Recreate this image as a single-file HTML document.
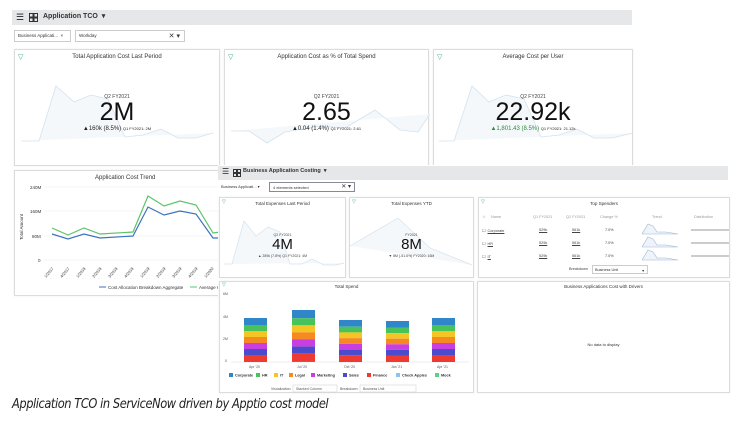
<!DOCTYPE html>
<html><head><meta charset="utf-8"><style>
*{margin:0;padding:0;box-sizing:border-box}
body{width:740px;height:425px;background:#fff;position:relative;overflow:hidden;font-family:"Liberation Sans",sans-serif;color:#222}
.a{position:absolute}
.bar{background:#e6e7e8}
.card{position:absolute;background:#fff;border:1px solid #dcdcdc;box-shadow:0 0 2px rgba(0,0,0,.08)}
.t{position:absolute;left:0;right:0;text-align:center;font-size:6px;color:#333}
.f{position:absolute;color:#3aa58a;font-size:7px}
.sel{position:absolute;border:1px solid #ccc;background:#fff;font-size:4.5px;padding:2px 3px;color:#333}
.big{position:absolute;left:0;right:0;text-align:center;color:#111}
.s{font-size:5px;color:#444;text-align:center;position:absolute;left:0;right:0}
</style></head><body>
<div class="a bar" style="left:12px;top:10px;width:620px;height:15px"></div>
<div class="a" style="left:16px;top:13px;font-size:9px;line-height:9px">&#9776;</div>
<svg class="a" style="left:29px;top:13px" width="9" height="9"><rect x="0.5" y="0.5" width="3.5" height="3.5" fill="none" stroke="#333"/><rect x="5" y="0.5" width="3.5" height="3.5" fill="none" stroke="#333"/><rect x="0.5" y="5" width="3.5" height="3.5" fill="none" stroke="#333"/><rect x="5" y="5" width="3.5" height="3.5" fill="none" stroke="#333"/></svg>
<div class="a" style="left:43px;top:12px;font-size:7px;font-weight:bold;color:#333">Application TCO &nbsp;▾</div>
<div class="sel" style="left:14px;top:30px;width:57px;height:12px">Business Applicati... &nbsp;×</div>
<div class="sel" style="left:75px;top:30px;width:110px;height:12px">Workday<span style="position:absolute;right:4px;top:1px;font-size:7px">✕ ▾</span></div>

<div class="card" style="left:14px;top:49px;width:206px;height:117px">
<div class="f" style="left:3px;top:3px">▽</div><div class="t" style="top:4px">Total Application Cost Last Period</div>
<svg class="a" style="left:0;top:0" width="206" height="117"><path d="M6 91 L24 91 L41 36 L59 52 L76 45 L93 49 L110 87 L128 85 L146 79 L163 88 L181 88 L198 83" fill="#f5f8fb" stroke="#d3e2ee" stroke-width="0.8"/></svg>
<div class="s" style="top:44px">Q2 FY2021</div><div class="big" style="top:48px;font-size:25px">2M</div><div class="s" style="top:76px;font-size:6px;color:#222">▲160k (8.5%) <span style="font-size:4px">Q1 FY2021: 2M</span></div></div>
<div class="card" style="left:224px;top:49px;width:205px;height:117px">
<div class="f" style="left:3px;top:3px">▽</div><div class="t" style="top:4px">Application Cost as % of Total Spend</div>
<svg class="a" style="left:0;top:0" width="205" height="117"><path d="M6 81 L24 81 L42 93 L60 82 L96 76 L120 78 L150 60 L175 80 L193 82 L205 64" fill="#f5f8fb" stroke="#d3e2ee" stroke-width="0.8"/></svg>
<div class="s" style="top:44px">Q2 FY2021</div><div class="big" style="top:48px;font-size:25px">2.65</div><div class="s" style="top:76px;font-size:6px;color:#222">▲0.04 (1.4%) <span style="font-size:4px">Q1 FY2021: 2.61</span></div></div>
<div class="card" style="left:433px;top:49px;width:200px;height:117px">
<div class="f" style="left:3px;top:3px">▽</div><div class="t" style="top:4px">Average Cost per User</div>
<svg class="a" style="left:0;top:0" width="200" height="117"><path d="M5 91 L20 91 L38 36 L55 52 L72 45 L90 49 L107 87 L125 85 L143 79 L160 88 L178 88 L199 83" fill="#f5f8fb" stroke="#d3e2ee" stroke-width="0.8"/></svg>
<div class="s" style="top:44px">Q2 FY2021</div><div class="big" style="top:48px;font-size:25px">22.92k</div><div class="s" style="top:76px;font-size:6px;color:#2a8a3a">▲1,801.43 (8.5%) <span style="font-size:4px;color:#222">Q1 FY2021: 21.12k</span></div></div>

<div class="card" style="left:14px;top:170px;width:206px;height:126px">
<div class="t" style="top:4px;font-size:6px;left:80px;right:auto">Application Cost Trend</div></div>
<svg class="a" style="left:14px;top:170px" width="206" height="126" font-family="Liberation Sans" font-size="4.5" fill="#333">
<g stroke="#eee" stroke-width="0.6"><line x1="30" y1="17" x2="206" y2="17"/><line x1="30" y1="41" x2="206" y2="41"/><line x1="30" y1="66" x2="206" y2="66"/><line x1="30" y1="90" x2="206" y2="90"/></g>
<text x="16" y="19">240M</text><text x="16" y="43">160M</text><text x="18" y="68">80M</text><text x="24" y="92">0</text>
<text transform="translate(9,70) rotate(-90)">Total Amount</text>
<polyline points="38,58 54,65 70,58 86,64 119,62 134,26 150,36 166,31 182,35 199,63 206,62" fill="none" stroke="#5bc468" stroke-width="1.2"/>
<polyline points="38,64 54,69 70,64 86,68 119,66 134,37 150,45 166,41 182,44 199,68 206,68" fill="none" stroke="#3d72c0" stroke-width="1.2"/>
<g font-size="4"><text transform="translate(32,108) rotate(-50)">1/2017</text><text transform="translate(48,108) rotate(-50)">4/2017</text><text transform="translate(64,108) rotate(-50)">1/2018</text><text transform="translate(80,108) rotate(-50)">2/2018</text><text transform="translate(96,108) rotate(-50)">3/2018</text><text transform="translate(112,108) rotate(-50)">4/2018</text><text transform="translate(128,108) rotate(-50)">1/2019</text><text transform="translate(144,108) rotate(-50)">2/2019</text><text transform="translate(160,108) rotate(-50)">3/2019</text><text transform="translate(176,108) rotate(-50)">4/2019</text><text transform="translate(192,108) rotate(-50)">1/2020</text></g>
<line x1="85" y1="117" x2="92" y2="117" stroke="#3d72c0"/><text x="94" y="119">Cost Allocation Breakdown Aggregate</text>
<line x1="176" y1="117" x2="183" y2="117" stroke="#5bc468"/><text x="185" y="119">Average C</text>
</svg>

<div class="a" style="left:218px;top:165px;width:512px;height:228px;background:#fff"></div>
<div class="a bar" style="left:218px;top:166px;width:510px;height:14px"></div>
<div class="a" style="left:222px;top:167px;font-size:8px;line-height:9px">&#9776;</div>
<svg class="a" style="left:233px;top:169px" width="8" height="8"><rect x="0.5" y="0.5" width="3" height="3" fill="none" stroke="#333"/><rect x="4.5" y="0.5" width="3" height="3" fill="none" stroke="#333"/><rect x="0.5" y="4.5" width="3" height="3" fill="none" stroke="#333"/><rect x="4.5" y="4.5" width="3" height="3" fill="none" stroke="#333"/></svg>
<div class="a" style="left:243px;top:168px;font-size:5.5px;font-weight:bold;color:#333">Business Application Costing &nbsp;▾</div>
<div class="a" style="left:221px;top:184px;font-size:4px;color:#333">Business Applicati... ▾</div>
<div class="sel" style="left:269px;top:182px;width:86px;height:10px;font-size:4px;padding:1.5px 3px;border-color:#889">4 elements selected<span style="position:absolute;right:3px;top:0;font-size:6px">✕ ▾</span></div>

<div class="card" style="left:219px;top:197px;width:127px;height:81px">
<div class="f" style="left:2px;top:1px;font-size:5px">▽</div><div class="t" style="top:3px;font-size:4.5px">Total Expenses Last Period</div>
<svg class="a" style="left:0;top:0" width="127" height="81"><path d="M4 66 L12 66 L24 23 L36 38 L48 29 L60 34 L70 66 L82 66 L92 61 L104 67 L116 67 L124 65" fill="#f5f8fb" stroke="#d3e2ee" stroke-width="0.7"/></svg>
<div class="s" style="top:35px;font-size:3.5px">Q2 FY2021</div><div class="big" style="top:38px;font-size:15px">4M</div><div class="s" style="top:56px;font-size:3.5px">▲ 289k (7.8%) Q1 FY2021: 4M</div></div>
<div class="card" style="left:349px;top:197px;width:125px;height:81px">
<div class="f" style="left:2px;top:1px;font-size:5px">▽</div><div class="t" style="top:3px;font-size:4.5px">Total Expenses YTD</div>
<svg class="a" style="left:0;top:0" width="125" height="81"><path d="M0 48 L48 20 L80 50 L122 67" fill="#f5f8fb" stroke="#d3e2ee" stroke-width="0.7"/></svg>
<div class="s" style="top:35px;font-size:3.5px">FY2021</div><div class="big" style="top:38px;font-size:15px">8M</div><div class="s" style="top:56px;font-size:3.5px">▼ 8M (-51.6%) FY2020: 16M</div></div>
<div class="card" style="left:478px;top:197px;width:252px;height:81px;font-size:3.8px;color:#444">
<div class="f" style="left:2px;top:1px;font-size:5px">▽</div><div class="t" style="top:3px;font-size:4.5px;color:#333">Top Spenders</div>
<div class="a" style="left:3px;top:16px;color:#3aa58a">☆</div><div class="a" style="left:12px;top:17px;color:#999">Name</div><div class="a" style="left:54px;top:17px;color:#999">Q1 FY2021</div><div class="a" style="left:87px;top:17px;color:#999">Q2 FY2021</div><div class="a" style="left:121px;top:17px;color:#999">Change %</div><div class="a" style="left:173px;top:17px;color:#999">Trend</div><div class="a" style="left:215px;top:17px;color:#999">Distribution</div>
<div class="a" style="left:3px;top:30px">☐ &nbsp;<u>Corporate</u></div><div class="a" style="left:60px;top:30px"><u>529k</u></div><div class="a" style="left:93px;top:30px"><u>561k</u></div><div class="a" style="left:126px;top:30px">7.0%</div>
<div class="a" style="left:3px;top:43px">☐ &nbsp;<u>HR</u></div><div class="a" style="left:60px;top:43px"><u>529k</u></div><div class="a" style="left:93px;top:43px"><u>561k</u></div><div class="a" style="left:126px;top:43px">7.0%</div>
<div class="a" style="left:3px;top:56px">☐ &nbsp;<u>IT</u></div><div class="a" style="left:60px;top:56px"><u>529k</u></div><div class="a" style="left:93px;top:56px"><u>561k</u></div><div class="a" style="left:126px;top:56px">7.0%</div>
<svg class="a" style="left:163px;top:22px" width="40" height="44"><g fill="#eef4fa" stroke="#9cb8d6" stroke-width="0.6"><path d="M0 14 L6 4 L11 6 L15 12 L24 12 L30 13 L36 14 L0 14"/><path d="M0 27 L6 17 L11 19 L15 25 L24 25 L30 26 L36 27 L0 27"/><path d="M0 40 L6 30 L11 32 L15 38 L24 38 L30 39 L36 40 L0 40"/></g></svg>
<div class="a" style="left:212px;top:31px;width:38px;height:2px;background:#ccc"></div><div class="a" style="left:212px;top:44px;width:38px;height:2px;background:#ccc"></div><div class="a" style="left:212px;top:57px;width:38px;height:2px;background:#ccc"></div>
<div class="a" style="left:90px;top:69px">Breakdown</div><div class="sel" style="left:113px;top:67px;width:56px;height:9px;font-size:3.8px;padding:1.5px 2px">Business Unit<span style="position:absolute;right:3px">▾</span></div>
</div>

<div class="card" style="left:219px;top:281px;width:255px;height:112px">
<div class="f" style="left:2px;top:0px;font-size:5px">▽</div><div class="t" style="top:2px;font-size:4.5px">Total Spend</div></div>
<svg class="a" style="left:219px;top:281px" width="255" height="112" font-family="Liberation Sans" font-size="3.5" fill="#555">
<text x="4" y="14">6M</text><text x="4" y="37">4M</text><text x="4" y="59">2M</text><text x="6" y="81">0</text>
<line x1="12" y1="81" x2="250" y2="81" stroke="#ddd" stroke-width="0.5"/>
<defs><g id="b"><rect y="0" width="23" height="7" fill="#2f86c8"/><rect y="7" width="23" height="6" fill="#47c35a"/><rect y="13" width="23" height="6" fill="#f5c623"/><rect y="19" width="23" height="6" fill="#f58a23"/><rect y="25" width="23" height="6" fill="#c93ee0"/><rect y="31" width="23" height="6" fill="#4a4ccb"/><rect y="37" width="23" height="7" fill="#ee3b32"/></g></defs>
<use href="#b" transform="translate(25,37)"/><use href="#b" transform="translate(73,29) scale(1,1.18)"/><use href="#b" transform="translate(120,39) scale(1,0.955)"/><use href="#b" transform="translate(167,40) scale(1,0.932)"/><use href="#b" transform="translate(213,37)"/>
<text x="30" y="87">Apr '20</text><text x="78" y="87">Jul '20</text><text x="125" y="87">Oct '20</text><text x="172" y="87">Jan '21</text><text x="218" y="87">Apr '21</text>
<g font-size="3.8" font-weight="bold" fill="#333">
<rect x="10" y="92" width="4" height="4" fill="#2f86c8"/><text x="16" y="95.5">Corporate</text>
<rect x="37" y="92" width="4" height="4" fill="#47c35a"/><text x="43" y="95.5">HR</text>
<rect x="55" y="92" width="4" height="4" fill="#f5c623"/><text x="61" y="95.5">IT</text>
<rect x="70" y="92" width="4" height="4" fill="#f58a23"/><text x="76" y="95.5">Legal</text>
<rect x="92" y="92" width="4" height="4" fill="#c93ee0"/><text x="98" y="95.5">Marketing</text>
<rect x="124" y="92" width="4" height="4" fill="#4a4ccb"/><text x="130" y="95.5">Sales</text>
<rect x="148" y="92" width="4" height="4" fill="#ee3b32"/><text x="154" y="95.5">Finance</text>
<rect x="177" y="92" width="4" height="4" fill="#8fc3ee"/><text x="183" y="95.5">Check Apples</text>
<rect x="216" y="92" width="4" height="4" fill="#5bd08a"/><text x="222" y="95.5">Mock</text></g>
<text x="52" y="109">Visualization</text><rect x="74" y="104" width="44" height="7" fill="#fff" stroke="#ccc" stroke-width="0.5"/><text x="77" y="109">Stacked Column</text>
<text x="121" y="109">Breakdown</text><rect x="141" y="104" width="56" height="7" fill="#fff" stroke="#ccc" stroke-width="0.5"/><text x="144" y="109">Business Unit</text>
</svg>
<div class="card" style="left:477px;top:281px;width:253px;height:112px">
<div class="t" style="top:2px;font-size:4.5px">Business Applications Cost with Drivers</div>
<div class="t" style="top:60px;font-size:4px">No data to display</div></div>

<div class="a" style="left:12px;top:396px;font-size:13.5px;font-style:italic;color:#222;font-family:'DejaVu Sans','Liberation Sans',sans-serif;letter-spacing:-0.5px;white-space:nowrap;transform:scaleX(0.845);transform-origin:left">Application TCO in ServiceNow driven by Apptio cost model</div>
</body></html>
